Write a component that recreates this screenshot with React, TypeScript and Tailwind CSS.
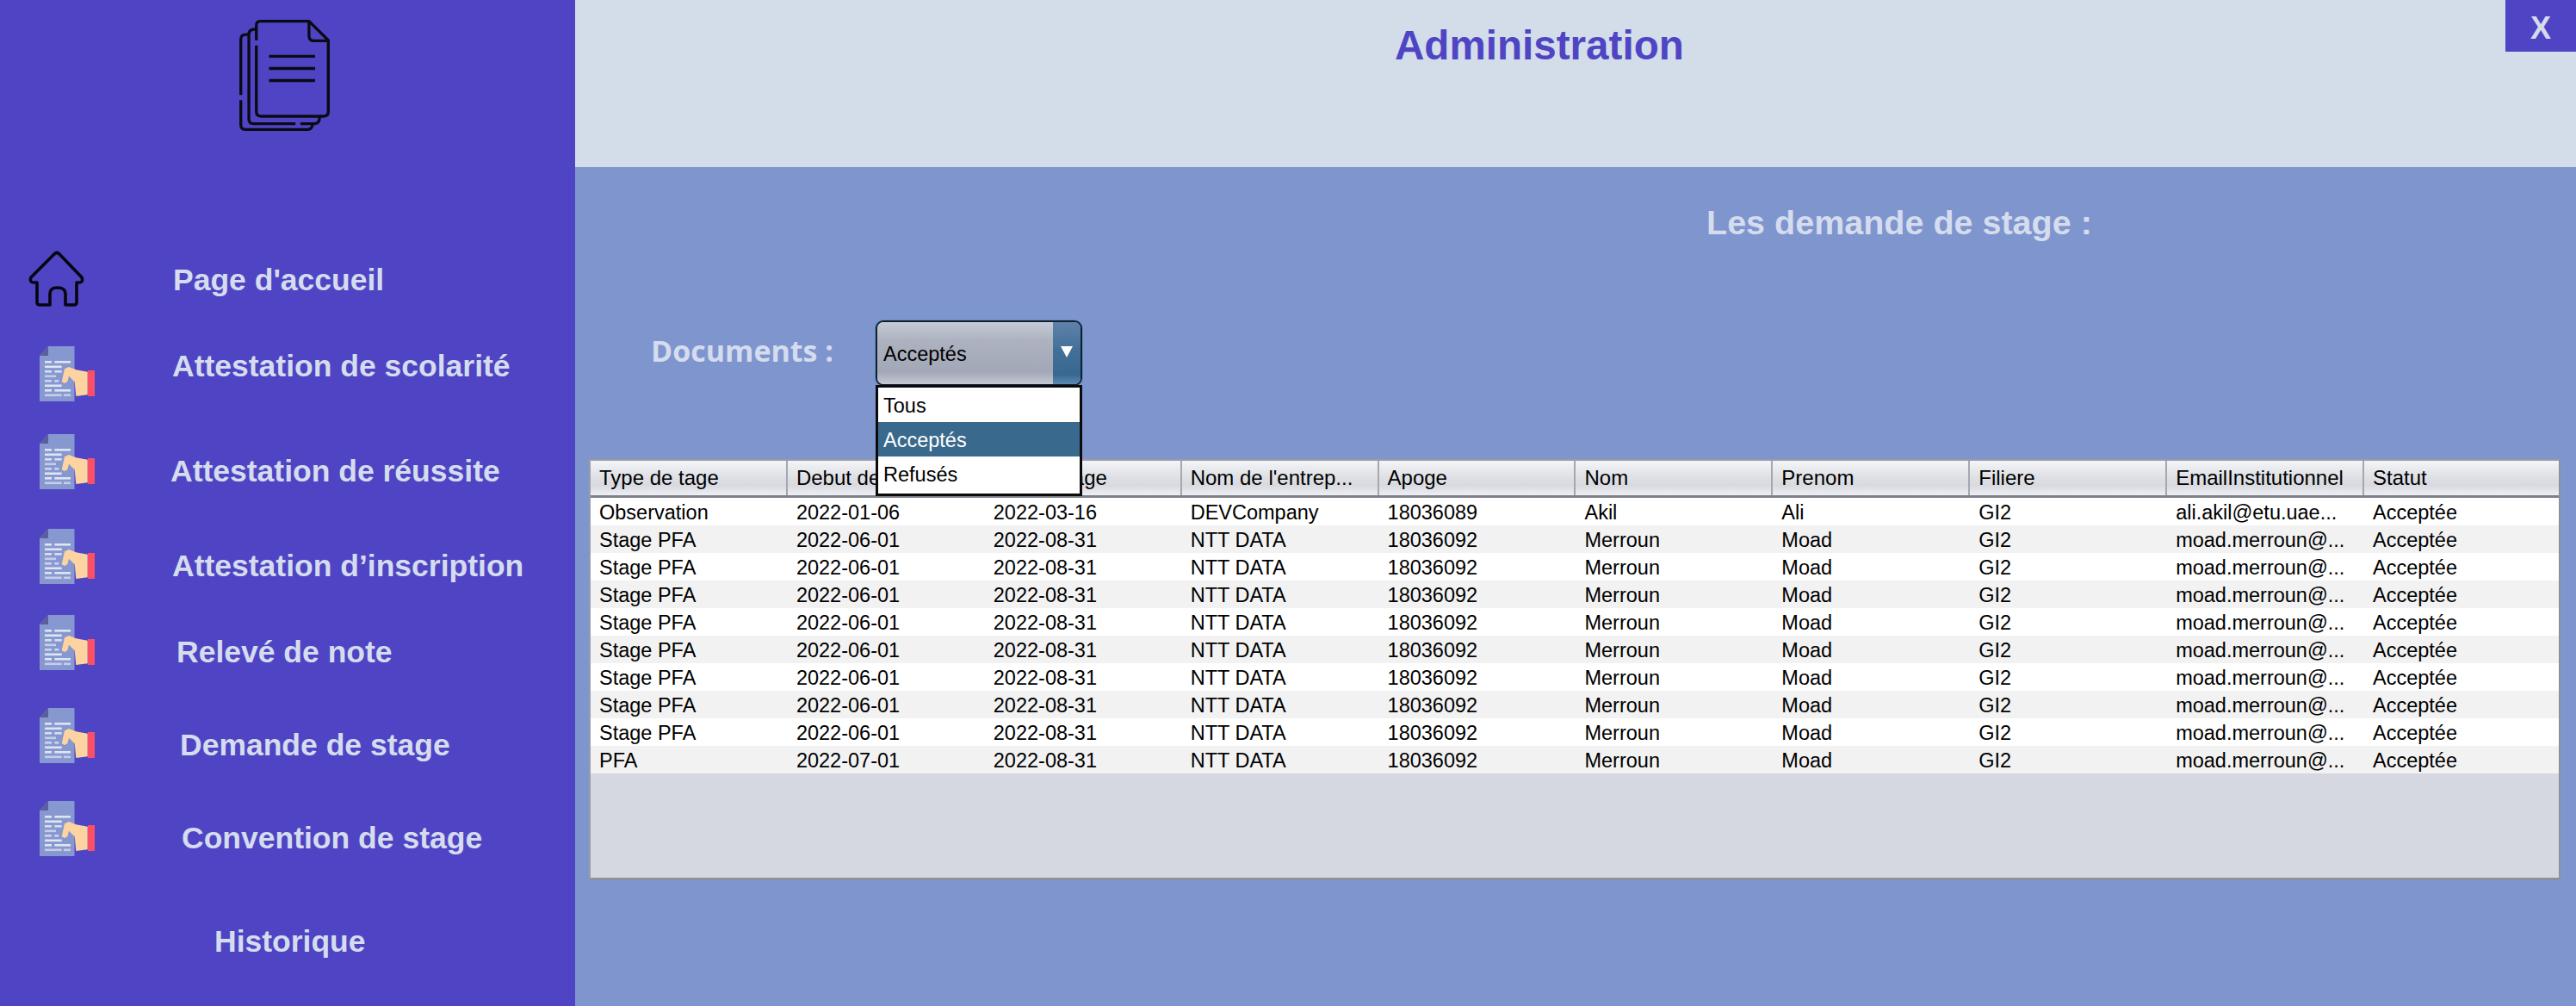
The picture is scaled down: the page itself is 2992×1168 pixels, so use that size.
import React from "react";

function LogoIcon() {
  return (
    <svg viewBox="80 38 320 392" width="107" height="131" fill="none" stroke="#0a0a14" strokeWidth="10" strokeLinecap="butt" strokeLinejoin="round" className="ml-[277px] mt-[22px] block">
      <path d="M142 112 V60 Q142 46 156 46 H325 L392 112 V360 Q392 376 376 376 H158 Q142 376 142 360 V130" />
      <path d="M325 46 V96 Q325 114 343 114 H392" />
      <path d="M186 168 H346 M186 210 H346 M186 252 H346" />
      <path d="M142 74 H135 Q116 74 116 92 V386 Q116 402 132 402 H278" />
      <path d="M295 402 H345 Q362 402 362 378" />
      <path d="M116 92 H106 Q88 92 88 108 V302" />
      <path d="M88 320 V406 Q88 422 104 422 H320 Q336 422 338 402" />
    </svg>
  );
}

function HomeIcon() {
  return (
    <svg viewBox="0 0 68 68" width="68" height="68" fill="none" stroke="#05050f" strokeWidth="3.600" strokeLinejoin="round" className="block shrink-0">
      <path d="M11 38 H7 Q2 38 4 32 L31 5 Q34 2 37 5 L63 32 Q65 38 60 38 H57 V61 Q57 64 54 64 H44 V51 Q44 44 34.500 44 Q26 44 26 51 V64 H14 Q11 64 11 61 Z" />
    </svg>
  );
}

function DocHandIcon() {
  const lines: [number, number, number, number][] = [
    [6, 17, 8, 1],[17.300, 17, 18.700, 1],
    [6, 22.500, 19.700, 1],
    [6, 28, 8, 0.900],[17.300, 28, 8.400, 0.900],
    [6, 33.500, 13, 0.700],
    [6, 39, 8, 0.800],[17.300, 39, 5, 0.800],
    [6, 44.500, 19.700, 1],
    [6, 50, 8, 1],[17.300, 50, 18.700, 1],
    [6, 55.500, 19.700, 0.700],[28, 55.500, 8, 0.700],
  ];
  return (
    <svg viewBox="0 0 64 64" width="64" height="64" className="block shrink-0">
      <polygon points="10,0 40.500,0 40.500,64 0,64 0,11" fill="#8698cf" />
      <polygon points="0,11 10,0 10,11" fill="#5a5f9c" />
      {lines.map(([x, y, w, o], i) => (
        <rect key={i} x={x} y={y} width={w} height="2.600" fill="#dfe5f3" opacity={o} />
      ))}
      <polygon points="25.700,41.300 29,26.300 34,24 42.300,27.300 55.700,29.700 55.700,56.300 42.300,58 40.700,41.300 34,34.700 32.300,41.300 29,43" fill="#fdd3a2" />
      <rect x="56" y="28" width="8" height="30" fill="#fb4f66" />
    </svg>
  );
}

const navText = "font-bold text-[35.500px] leading-[42px] text-[#d5dcee] whitespace-nowrap";
const docRow = "h-[64px] pl-[46px] flex items-center";

const columns = ["Type de tage", "Debut de stage", "Fin de stage", "Nom de l'entrep...", "Apoge", "Nom", "Prenom", "Filiere", "EmailInstitutionnel", "Statut"];

const stagePfa = ["Stage PFA", "2022-06-01", "2022-08-31", "NTT DATA", "18036092", "Merroun", "Moad", "GI2", "moad.merroun@...", "Acceptée"];
const rows = [
  ["Observation", "2022-01-06", "2022-03-16", "DEVCompany", "18036089", "Akil", "Ali", "GI2", "ali.akil@etu.uae...", "Acceptée"],
  stagePfa, stagePfa, stagePfa, stagePfa, stagePfa, stagePfa, stagePfa, stagePfa,
  ["PFA", "2022-07-01", "2022-08-31", "NTT DATA", "18036092", "Merroun", "Moad", "GI2", "moad.merroun@...", "Acceptée"],
];

export default function App() {
  return (
    <div className="flex w-[2992px] h-[1168px] overflow-hidden font-['Liberation_Sans',Arial,sans-serif] bg-[#7f95ce]">
      <aside className="w-[668px] h-full shrink-0 bg-[#4f45c4] flex flex-col">
        <LogoIcon />
        <div className="mt-[137px] h-[68px] pl-[32px] flex items-center">
          <HomeIcon />
          <span className={`${navText} ml-[101px] mb-[-2px]`}>Page d'accueil</span>
        </div>
        <div className={`mt-[44px] ${docRow}`}>
          <DocHandIcon />
          <span className={`${navText} ml-[90px] mb-[18px]`}>Attestation de scolarité</span>
        </div>
        <div className={`mt-[38px] ${docRow}`}>
          <DocHandIcon />
          <span className={`${navText} ml-[88px] mt-[22px]`}>Attestation de réussite</span>
        </div>
        <div className={`mt-[46px] ${docRow}`}>
          <DocHandIcon />
          <span className={`${navText} ml-[90px] mt-[22px]`}>Attestation d’inscription</span>
        </div>
        <div className={`mt-[36px] ${docRow}`}>
          <DocHandIcon />
          <span className={`${navText} ml-[95px] mt-[22px]`}>Relevé de note</span>
        </div>
        <div className={`mt-[44px] ${docRow}`}>
          <DocHandIcon />
          <span className={`${navText} ml-[99px] mt-[22px]`}>Demande de stage</span>
        </div>
        <div className={`mt-[44px] ${docRow}`}>
          <DocHandIcon />
          <span className={`${navText} ml-[101px] mt-[22px]`}>Convention de stage</span>
        </div>
        <div className="mt-[78px] pl-[249px]">
          <span className={navText}>Historique</span>
        </div>
      </aside>

      <main className="flex-1 flex flex-col relative">
        <header className="h-[194px] shrink-0 bg-[#d3dde9] pl-[952px] pt-[26px]">
          <h1 className="text-[47.600px] leading-[54px] font-bold text-[#4f45c4]">Administration</h1>
        </header>
        <button className="absolute top-0 right-0 w-[82px] h-[60px] bg-[#4f45c4] text-[#d5dcee] text-[36px] leading-[66px] font-bold text-center">X</button>

        <div className="pl-[1314px] pt-[40px]">
          <h2 className="text-[39.500px] leading-[48px] font-bold text-[#d5dcee] whitespace-nowrap">Les demande de stage :</h2>
        </div>

        <div className="mt-[90px] flex items-start">
          <span className="ml-[88px] w-[261px] mt-[12px] text-[34px] leading-[46px] font-bold text-[#d5dcee] font-['Open_Sans',sans-serif] whitespace-nowrap">Documents :</span>
          <div className="relative w-[240px] h-[76px]">
            <div className="w-full h-full flex border-[2px] border-[#14202f] rounded-[9px] overflow-hidden shadow-[0_0_0_1px_#5b8fbf]">
              <div className="flex-1 pl-[7px] flex items-center pt-[4px] text-[23.500px] text-black bg-[linear-gradient(#c6cad6_0%,#adb2c0_30%,#a2a8b7_80%,#c4c8d4_100%)]">Acceptés</div>
              <div className="w-[32px] flex items-center justify-center bg-[linear-gradient(#5f82a8_0%,#42709a_45%,#386890_85%,#5e8ab2_100%)]">
                <svg width="14" height="13" viewBox="0 0 14 13" className="block mt-[-4px]"><polygon points="0,0 14,0 7,13" fill="#ffffff" /></svg>
              </div>
            </div>
            <ul className="absolute z-10 top-[75px] left-0 w-[240px] h-[129px] bg-white border-[3px] border-[#0b0b0b] text-[23.500px] leading-[43px] text-black">
              <li className="h-[40px] pl-[6px]">Tous</li>
              <li className="h-[40px] pl-[6px] bg-[#396a8d] text-white">Acceptés</li>
              <li className="h-[40px] pl-[6px]">Refusés</li>
            </ul>
          </div>
        </div>

        <section className="ml-[16px] mt-[85px] w-[2290px] h-[489px] flex flex-col border-t-[2px] border-l-[2px] border-r-[2px] border-b-[3px] border-t-[#9a9da6] border-l-[#9a9da6] border-r-[#8e9199] border-b-[#8e9199] bg-[#d5d8e1] text-[23.500px] text-black">
          <div className="flex h-[43px] shrink-0 border-b-[3px] border-b-[#7e8188] text-[24px] bg-[linear-gradient(#f4f5f8_0%,#dfe1e6_45%,#d8dae0_72%,#eef0f6_100%)]">
            {columns.map((c, i) => (
              <div key={i} className="w-[228.900px] h-full shrink-0 pl-[10px] leading-[40px] whitespace-nowrap overflow-hidden border-r-[2px] border-r-[#a5a8b0] last:border-r-0">{c}</div>
            ))}
          </div>
          {rows.map((r, i) => (
            <div key={i} className="flex h-[32px] shrink-0 even:bg-white odd:bg-[#f2f2f2]">
              {r.map((c, j) => (
                <div key={j} className="w-[228.900px] shrink-0 pl-[10px] leading-[34px] whitespace-nowrap overflow-hidden">{c}</div>
              ))}
            </div>
          ))}
        </section>
      </main>
    </div>
  );
}
